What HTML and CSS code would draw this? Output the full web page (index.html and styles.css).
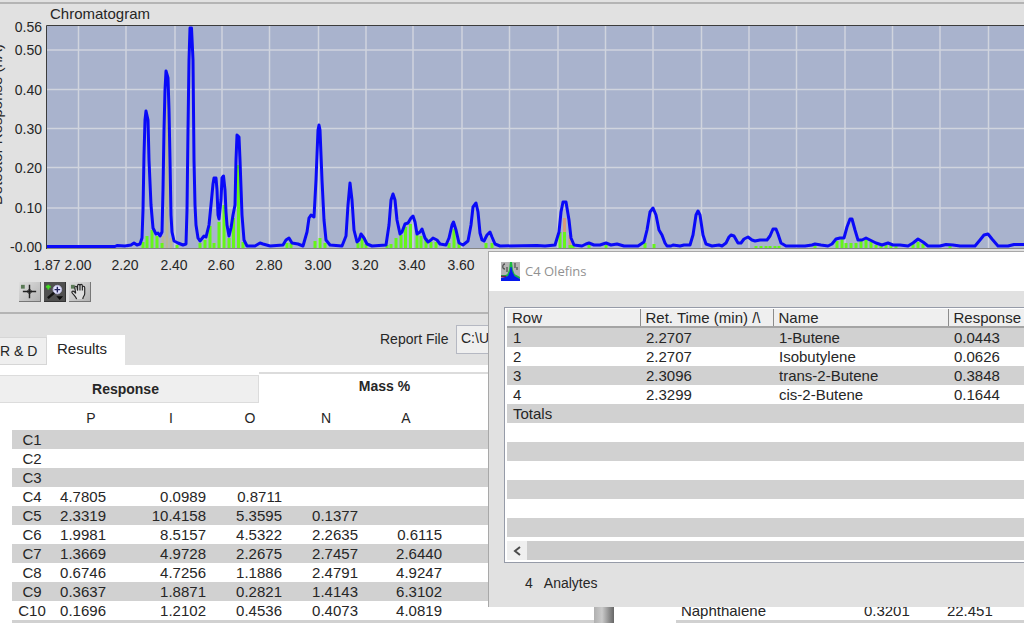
FILE: index.html
```html
<!DOCTYPE html>
<html lang="en">
<head>
<meta charset="utf-8">
<title>Chromatogram</title>
<link rel="stylesheet" href="styles.css">
</head>
<body>
<main class="app">
  <section class="chart">
    <h1 class="chart-title">Chromatogram</h1>
    <svg class="plot" viewBox="0 23 1024 256" role="img" aria-label="Chromatogram plot">
      <rect x="47" y="26" width="977" height="222" fill="#a9b3cd"/>
      <path class="grid" d="M78.500 26V248M126 26V248M175 26V248M222 26V248M269.500 26V248M318.500 26V248M366 26V248M413 26V248M462 26V248M509.500 26V248M558 26V248M605.500 26V248M653 26V248M701.500 26V248M749 26V248M796.500 26V248M845 26V248M892.500 26V248M940 26V248M988.500 26V248M47 50H1024M47 89.500H1024M47 128.500H1024M47 167.500H1024M47 208H1024"/>
      <path class="bars-tan" d="M163 236V248M167 100V248M171 238V248"/>
      <path class="bars-orange" d="M564.500 218V234M570 235V248"/>
      <path class="bars" d="M143 242V248M147 236V248M152 230V248M157 236V248M162 243V248M177 245V248M200 243V248M205 240V248M210 226V248M214 243V248M219 222V248M224 205V248M229 238V248M233.500 218V248M238.500 165V248M243 242V248M287 243V248M291 243V248M315 241V248M320 238V248M325 243V248M358 243V248M362 238V248M366 244V248M387 245V248M391 244V248M396 238V248M401 235V248M405.500 227V248M410.500 224V248M417 235V248M421 236V248M426 238V248M431 242V248M436 242V248M449 243V248M454 229V248M459 242V248M486 243V248M492 243V248M560 232V248M564.500 232V248M570 245V248M573 245V248M589 245V248M606 245V248M645 243V248M654 244V248M756 246V248M761 246V248M766 246V248M770 246V248M775 246V248M779 246V248M815 245V248M837 241V248M842 239V248M846 243V248M851 243V248M856 243V248M861 241V248M866 240V248M871 242V248M876 245V248M881 245V248M886 245V248M891 245V248M896 246V248M913 244V248M918 242V248M923 244V248M950 246V248"/>
      <polyline class="signal" points="47,246.500 115,246.500 117,245.500 125,246 131,245 134,243 137,245 140,244 142,238 143,210 144,155 145,120 146,111 148,120 149,160 151,205 153,228 156,234 158,233 160,236 162,232 163,190 164,130 165,90 166,71 168,78 169,110 170,160 171,215 172,232 174,241 178,243 183,245 186,244 187,210 188,130 189,60 190,28 191.500,28 193,60 194,160 195,205 196,225 198,238 200,241 204,236 206,237 209,225 211,205 213,184 214,178 216,178 217,190 218,215 219,219 221,200 222,178 223.500,176 225,190 226,212 227,225 229,236 231,228 233,215 235,205 236,160 237,135 239,137 240,160 242,215 244,240 247,246 255,246 260,243 263,244 270,246 283,245 286,240 289,238 292,243 298,244 303,246 307,232 309,218 311,215 314,217 316,180 318,130 319,125 320,130 322,180 324,220 326,240 330,245 342,246 346,236 348,205 350,183 352,200 354,230 357,242 359,240 361,234 364,238 367,244 372,246 386,245 389,225 391,200 393,194 395,200 397,220 400,234 402,232 405,224 408,223 411,218 413,216 415,222 417,234 420,232 422,229 425,238 428,242 431,240 433,238 437,240 440,244 446,245 449,238 452,225 453.500,222 456,230 459,243 463,245 468,241 471,225 473,207 476,203 478,212 480,233 482,240 484,241 487,235 490,232 492,237 495,244 500,246 537,245.500 545,246 555,245 559,232 561,212 563,202 566,202 569,220 571,238 574,245 582,246 586,244 589,243 594,245 600,245 606,243 611,245 617,244 624,246 638,246 644,242 647,230 650,212 653,208 656,215 659,230 662,235 665,243 667,246 671,246 673,245 680,246 684,245 690,245 693,235 696,215 698,211 700,215 703,235 706,244 712,246 719,245 722,246 726,243 729,237 731,235 734,236 738,243 741,243 744,239 748,237 752,240 755,241 760,240 767,240 770,236 773,229 776,229 778,234 781,243 786,246 805,246 812,245 815,244 821,245 828,246 832,244 836,239 840,238 844,238 847,227 850,219 852,219 855,230 858,240 862,240 866,238 870,240 876,243 882,245 888,243 893,245 900,245 908,246 913,243 918,239 923,242 928,246 940,246 946,244.500 953,245 960,246 975,246 980,240 984,235 988,234 992,239 998,246 1008,246 1014,244.500 1024,244.500"/>
      <path d="M47 248.500H1024" stroke="#858585"/>
      <path d="M46.500 249V25.500H1024" fill="none" stroke="#3c3c3c"/>
      <g class="tick tick-y">
        <text x="42" y="32">0.56</text><text x="42" y="55">0.50</text><text x="42" y="95">0.40</text><text x="42" y="134">0.30</text><text x="42" y="173">0.20</text><text x="42" y="213">0.10</text><text x="42" y="252">-0.00</text>
      </g>
      <g class="tick tick-x">
        <text x="47" y="270">1.87</text><text x="78" y="270">2.00</text><text x="125" y="270">2.20</text><text x="174" y="270">2.40</text><text x="221" y="270">2.60</text><text x="269" y="270">2.80</text><text x="318" y="270">3.00</text><text x="365" y="270">3.20</text><text x="412" y="270">3.40</text><text x="461" y="270">3.60</text>
      </g>
      <text class="axis-title" transform="translate(2 205) rotate(-90)">Detector Response (nA)</text>
    </svg>
    <div class="tools">
      <button class="tool" type="button" aria-label="Cursor">
        <svg viewBox="0 0 22 20"><path d="M2 3h4v4H2z" fill="#5a7a56"/><path d="M4 10h14M11 3v14" stroke="#222" stroke-width="1.500"/><circle cx="11" cy="10" r="2" fill="none" stroke="#222"/></svg>
      </button>
      <button class="tool tool-on" type="button" aria-label="Zoom">
        <svg viewBox="0 0 22 20"><path d="M2 5h5M4.500 3v5" stroke="#41df20" stroke-width="2"/><path d="M4 17l8-7" stroke="#111" stroke-width="2.500"/><circle cx="14" cy="8" r="4.500" fill="#e4e4ff" stroke="#b5b5d8"/><path d="M11 8h6M14 5v6" stroke="#24245e" stroke-width="1.500"/><path d="M13 15h7l-3.500 4z" fill="#080808"/></svg>
      </button>
      <button class="tool" type="button" aria-label="Pan">
        <svg viewBox="0 0 22 20"><path d="M2 3h4v4H2z" fill="#5a7a56"/><path d="M8 18c-1-3-3-4-5-7 0-2 2-2 4 1L6 6c0-2 2-2 2.500 0L9 9V4c0-2 2.500-2 2.500 0v5-5c0-2 2.500-2 2.500 0v5-3c0-2 2.500-2 2.500 0v6c0 3-2 3-2 6" fill="#ddd" stroke="#222" stroke-width="1.200"/></svg>
      </button>
    </div>
  </section>

  <section class="results">
    <header class="results-head">
      <nav class="tabs">
        <button class="tab tab-side" type="button">R &amp; D</button>
        <button class="tab tab-active" type="button">Results</button>
      </nav>
      <div class="report">
        <label for="report-file">Report File</label>
        <input id="report-file" class="report-input" type="text" value="C:\U">
      </div>
    </header>
    <div class="panes">
      <div class="summary">
        <nav class="subtabs">
          <button class="subtab" type="button">Response</button>
          <button class="subtab subtab-active" type="button">Mass %</button>
        </nav>
        <table class="grid-table mass">
          <colgroup><col class="w-label"><col class="w-p"><col class="w-i"><col class="w-o"><col class="w-o"><col class="w-a"><col></colgroup>
          <thead><tr><th></th><th>P</th><th>I</th><th>O</th><th>N</th><th>A</th><th></th></tr></thead>
          <tbody>
            <tr><td>C1</td><td></td><td></td><td></td><td></td><td></td><td></td></tr>
            <tr><td>C2</td><td></td><td></td><td></td><td></td><td></td><td></td></tr>
            <tr><td>C3</td><td></td><td></td><td></td><td></td><td></td><td></td></tr>
            <tr><td>C4</td><td>4.7805</td><td>0.0989</td><td>0.8711</td><td></td><td></td><td></td></tr>
            <tr><td>C5</td><td>2.3319</td><td>10.4158</td><td>5.3595</td><td>0.1377</td><td></td><td></td></tr>
            <tr><td>C6</td><td>1.9981</td><td>8.5157</td><td>4.5322</td><td>2.2635</td><td>0.6115</td><td></td></tr>
            <tr><td>C7</td><td>1.3669</td><td>4.9728</td><td>2.2675</td><td>2.7457</td><td>2.6440</td><td></td></tr>
            <tr><td>C8</td><td>0.6746</td><td>4.7256</td><td>1.1886</td><td>2.4791</td><td>4.9247</td><td></td></tr>
            <tr><td>C9</td><td>0.3637</td><td>1.8871</td><td>0.2821</td><td>1.4143</td><td>6.3102</td><td></td></tr>
            <tr><td>C10</td><td>0.1696</td><td>1.2102</td><td>0.4536</td><td>0.4073</td><td>4.0819</td><td></td></tr>
            <tr><td></td><td></td><td></td><td></td><td></td><td></td><td></td></tr>
          </tbody>
        </table>
      </div>
      <div class="divider"></div>
      <table class="grid-table compounds">
        <colgroup><col class="w-compound"><col class="w-value"><col></colgroup>
        <tbody>
          <tr class="plain"><td>Naphthalene</td><td>0.3201</td><td>22.451</td></tr>
          <tr class="shaded"><td></td><td></td><td></td></tr>
        </tbody>
      </table>
    </div>
  </section>
</main>

<section class="dialog" role="dialog" aria-labelledby="dialog-title">
  <header class="dialog-bar">
    <svg class="dialog-icon" viewBox="0 0 19 19"><rect width="19" height="19" fill="#b5b5b5"/><path d="M4 2c-3 0-3 5 0 5M6 5v5M14 1v5M16 5v3" fill="none" stroke="#555" stroke-width="1.300"/><path d="M0 14h5l2-1 2-5 1-8 1 8 2 5 6 3" fill="none" stroke="#18bb42" stroke-width="2"/><path d="M0 16l4-1 3-1 2-5 .5-4h1l1 5 2 4 5.500 3v2H0z" fill="#0618ed"/><path d="M0 14.500h5" stroke="#7a164c" stroke-width="1.500"/></svg>
    <h2 id="dialog-title" class="dialog-title">C4 Olefins</h2>
  </header>
  <div class="dialog-body">
    <div class="list">
      <table class="grid-table analytes">
        <colgroup><col class="w-row"><col class="w-row"><col class="w-name"><col></colgroup>
        <thead><tr><th>Row</th><th>Ret. Time (min) /\</th><th>Name</th><th>Response</th></tr></thead>
        <tbody>
          <tr><td>1</td><td>2.2707</td><td>1-Butene</td><td>0.0443</td></tr>
          <tr><td>2</td><td>2.2707</td><td>Isobutylene</td><td>0.0626</td></tr>
          <tr><td>3</td><td>2.3096</td><td>trans-2-Butene</td><td>0.3848</td></tr>
          <tr><td>4</td><td>2.3299</td><td>cis-2-Butene</td><td>0.1644</td></tr>
          <tr><td>Totals</td><td></td><td></td><td></td></tr>
          <tr><td></td><td></td><td></td><td></td></tr>
          <tr><td></td><td></td><td></td><td></td></tr>
          <tr><td></td><td></td><td></td><td></td></tr>
          <tr><td></td><td></td><td></td><td></td></tr>
          <tr><td></td><td></td><td></td><td></td></tr>
          <tr><td></td><td></td><td></td><td></td></tr>
        </tbody>
      </table>
      <div class="hscroll">
        <button class="hscroll-left" type="button" aria-label="Scroll left"><svg viewBox="0 0 8 10"><path d="M7 1L2 5l5 4" fill="none" stroke="#4c4c4c" stroke-width="2"/></svg></button>
        <div class="hscroll-thumb"></div>
      </div>
    </div>
    <p class="count"><span>4</span><span>Analytes</span></p>
  </div>
</section>
</body>
</html>
```
FILE: styles.css
```css
* { box-sizing: border-box; }

body {
  margin: 0;
  height: 100vh;
  overflow: hidden;
  position: relative;
  background: #fff;
  color: #262626;
  font: 14px/19px "Liberation Sans", Arial, sans-serif;
}

button, input { font: inherit; color: inherit; }

/* Chromatogram */
.chart {
  background: #e1e1e1;
  border-bottom: 2px solid #b4b4b4;
}
.chart-title {
  margin: 0;
  padding: 4px 50px 0;
  height: 23px;
  font-size: 15px;
  font-weight: 400;
  line-height: 19px;
  background: linear-gradient(#e1e1e1 2px, #b4b4b4 2px, #b4b4b4 4px, transparent 4px);
}
.plot { display: block; width: 100%; overflow: visible; }
.grid { fill: none; stroke: #d0d4de; stroke-width: 1.500; }
.bars { stroke: #66f51a; stroke-width: 3; }
.bars-tan { stroke: #b9b896; stroke-width: 3; }
.bars-orange { stroke: #d89a7c; stroke-width: 3; }
.signal {
  fill: none;
  stroke: #0a0af8;
  stroke-width: 3;
  stroke-linejoin: round;
}
.tick { font-size: 14px; fill: #262626; }
.axis-title { font-size: 15px; fill: #262626; }
.tick-y { text-anchor: end; }
.tick-x { text-anchor: middle; }

.tools {
  display: flex;
  gap: 3px;
  padding: 3px 19px 10px;
}
.tool {
  width: 22px;
  height: 20px;
  padding: 0;
  border: solid;
  border-width: 0 1px 1px 0;
  border-color: #777;
  background: linear-gradient(135deg, #dedede, #b4b4b4);
}
.tool-on { background: #505050; border-color: #333; }
.tool svg { display: block; width: 100%; height: 100%; }

/* Results */
.results-head {
  display: flex;
  align-items: flex-end;
  height: 51px;
  background: #e1e1e1;
}
.tabs { display: flex; align-items: flex-end; width: 380px; }
.tab {
  border: 1px solid #d6d6d6;
  padding: 0 10px;
  background: #efefef;
}
.tab-side { width: 47px; height: 28px; padding: 0 9px 0 0; border-left: 0; text-align: right; white-space: nowrap; }
.tab-active { width: 78px; height: 30px; padding: 0 10px 4px; background: #fff; border: 0; font-size: 15px; text-align: left; }
.report {
  flex: 1;
  display: flex;
  align-items: center;
  gap: 4px;
  padding-bottom: 11px;
}
.report label { width: 72px; white-space: nowrap; }
.report-input {
  flex: 1;
  min-width: 0;
  height: 29px;
  padding: 0 4px 4px;
  border: 1px solid #b5b8c2;
  background: #efefef;
}

.panes { display: flex; }
.summary { width: 58%; padding-top: 7px; }
.subtabs { display: flex; align-items: flex-end; }
.subtab {
  width: 259px;
  height: 28px;
  border: 1px solid #dcdcdc;
  border-left: 0;
  padding: 0 7px 0 0;
  background: #efefef;
  font-weight: 700;
}
.subtab-active {
  flex: 1;
  height: 31px;
  padding: 0 84px 4px 0;
  border-width: 2px 0 0;
  background: #fff;
}
.divider {
  width: 20px;
  background: linear-gradient(90deg, #b0b0b0, #cacaca 40%, #666);
}

.grid-table {
  border-collapse: collapse;
  table-layout: fixed;
  font-size: 15px;
}
.grid-table th, .grid-table td { height: 19px; padding: 0; line-height: 19px; font-weight: 400; white-space: nowrap; }
.mass tbody tr:nth-child(odd), .analytes tbody tr:nth-child(odd), .shaded { background: #d1d1d1; }

.mass { width: calc(100% - 12px); margin-left: 12px; }
.mass th { height: 27px; padding-top: 4px; font-size: 14px; }
.mass td { padding-right: 6px; text-align: right; }
.mass td:first-child { padding: 0; text-align: center; }
.mass td:nth-child(2) { padding-right: 24px; }
.w-label { width: 40px; }
.w-p { width: 78px; }
.w-i { width: 82px; }
.w-o { width: 76px; }
.w-a { width: 84px; }

.compounds { flex: 1; align-self: flex-end; margin-left: 62px; }
.compounds td:first-child { padding-left: 5px; }
.w-compound { width: 188px; }
.w-value { width: 83px; }

/* Analyte window */
.dialog {
  position: absolute;
  top: 251px;
  left: 488px;
  right: 0;
  border: solid #a8a8a8;
  border-width: 1px 0 0 1px;
  background: #e1e1e1;
}
.dialog-bar {
  display: flex;
  align-items: center;
  gap: 5px;
  height: 39px;
  padding-left: 12px;
  background: #fff;
}
.dialog-icon { width: 19px; height: 19px; }
.dialog-title {
  margin: 0;
  font: 400 13px/19px "Open Sans", "Noto Sans", sans-serif;
  color: #919191;
}
.dialog-body { padding: 16px 0 14px 15px; }
.list {
  padding: 1px 0 2px 2px;
  border: solid #969ba8;
  border-width: 1px 0 1px 1px;
  background: #fff;
}
.analytes { width: 100%; }
.analytes th {
  height: 18px;
  padding-left: 5px;
  line-height: 17px;
  border-right: 1px solid #8c8c8c;
  border-bottom: 2px solid #a4a4a4;
  background: #efefef;
  text-align: left;
}
.analytes th:last-child { border-right: 0; }
.analytes td { padding-left: 6px; text-align: left; }
.w-row { width: 133px; }
.w-name { width: 175px; }

.hscroll { display: flex; height: 19px; margin-top: 4px; }
.hscroll-left {
  display: flex;
  align-items: center;
  justify-content: center;
  width: 20px;
  padding: 0;
  border: 0;
  background: #efefef;
}
.hscroll-left svg { width: 8px; height: 10px; }
.hscroll-thumb { flex: 1; background: #cdcdcd; }
.count { display: flex; gap: 11px; margin: 11px 0 0 21px; }
```
